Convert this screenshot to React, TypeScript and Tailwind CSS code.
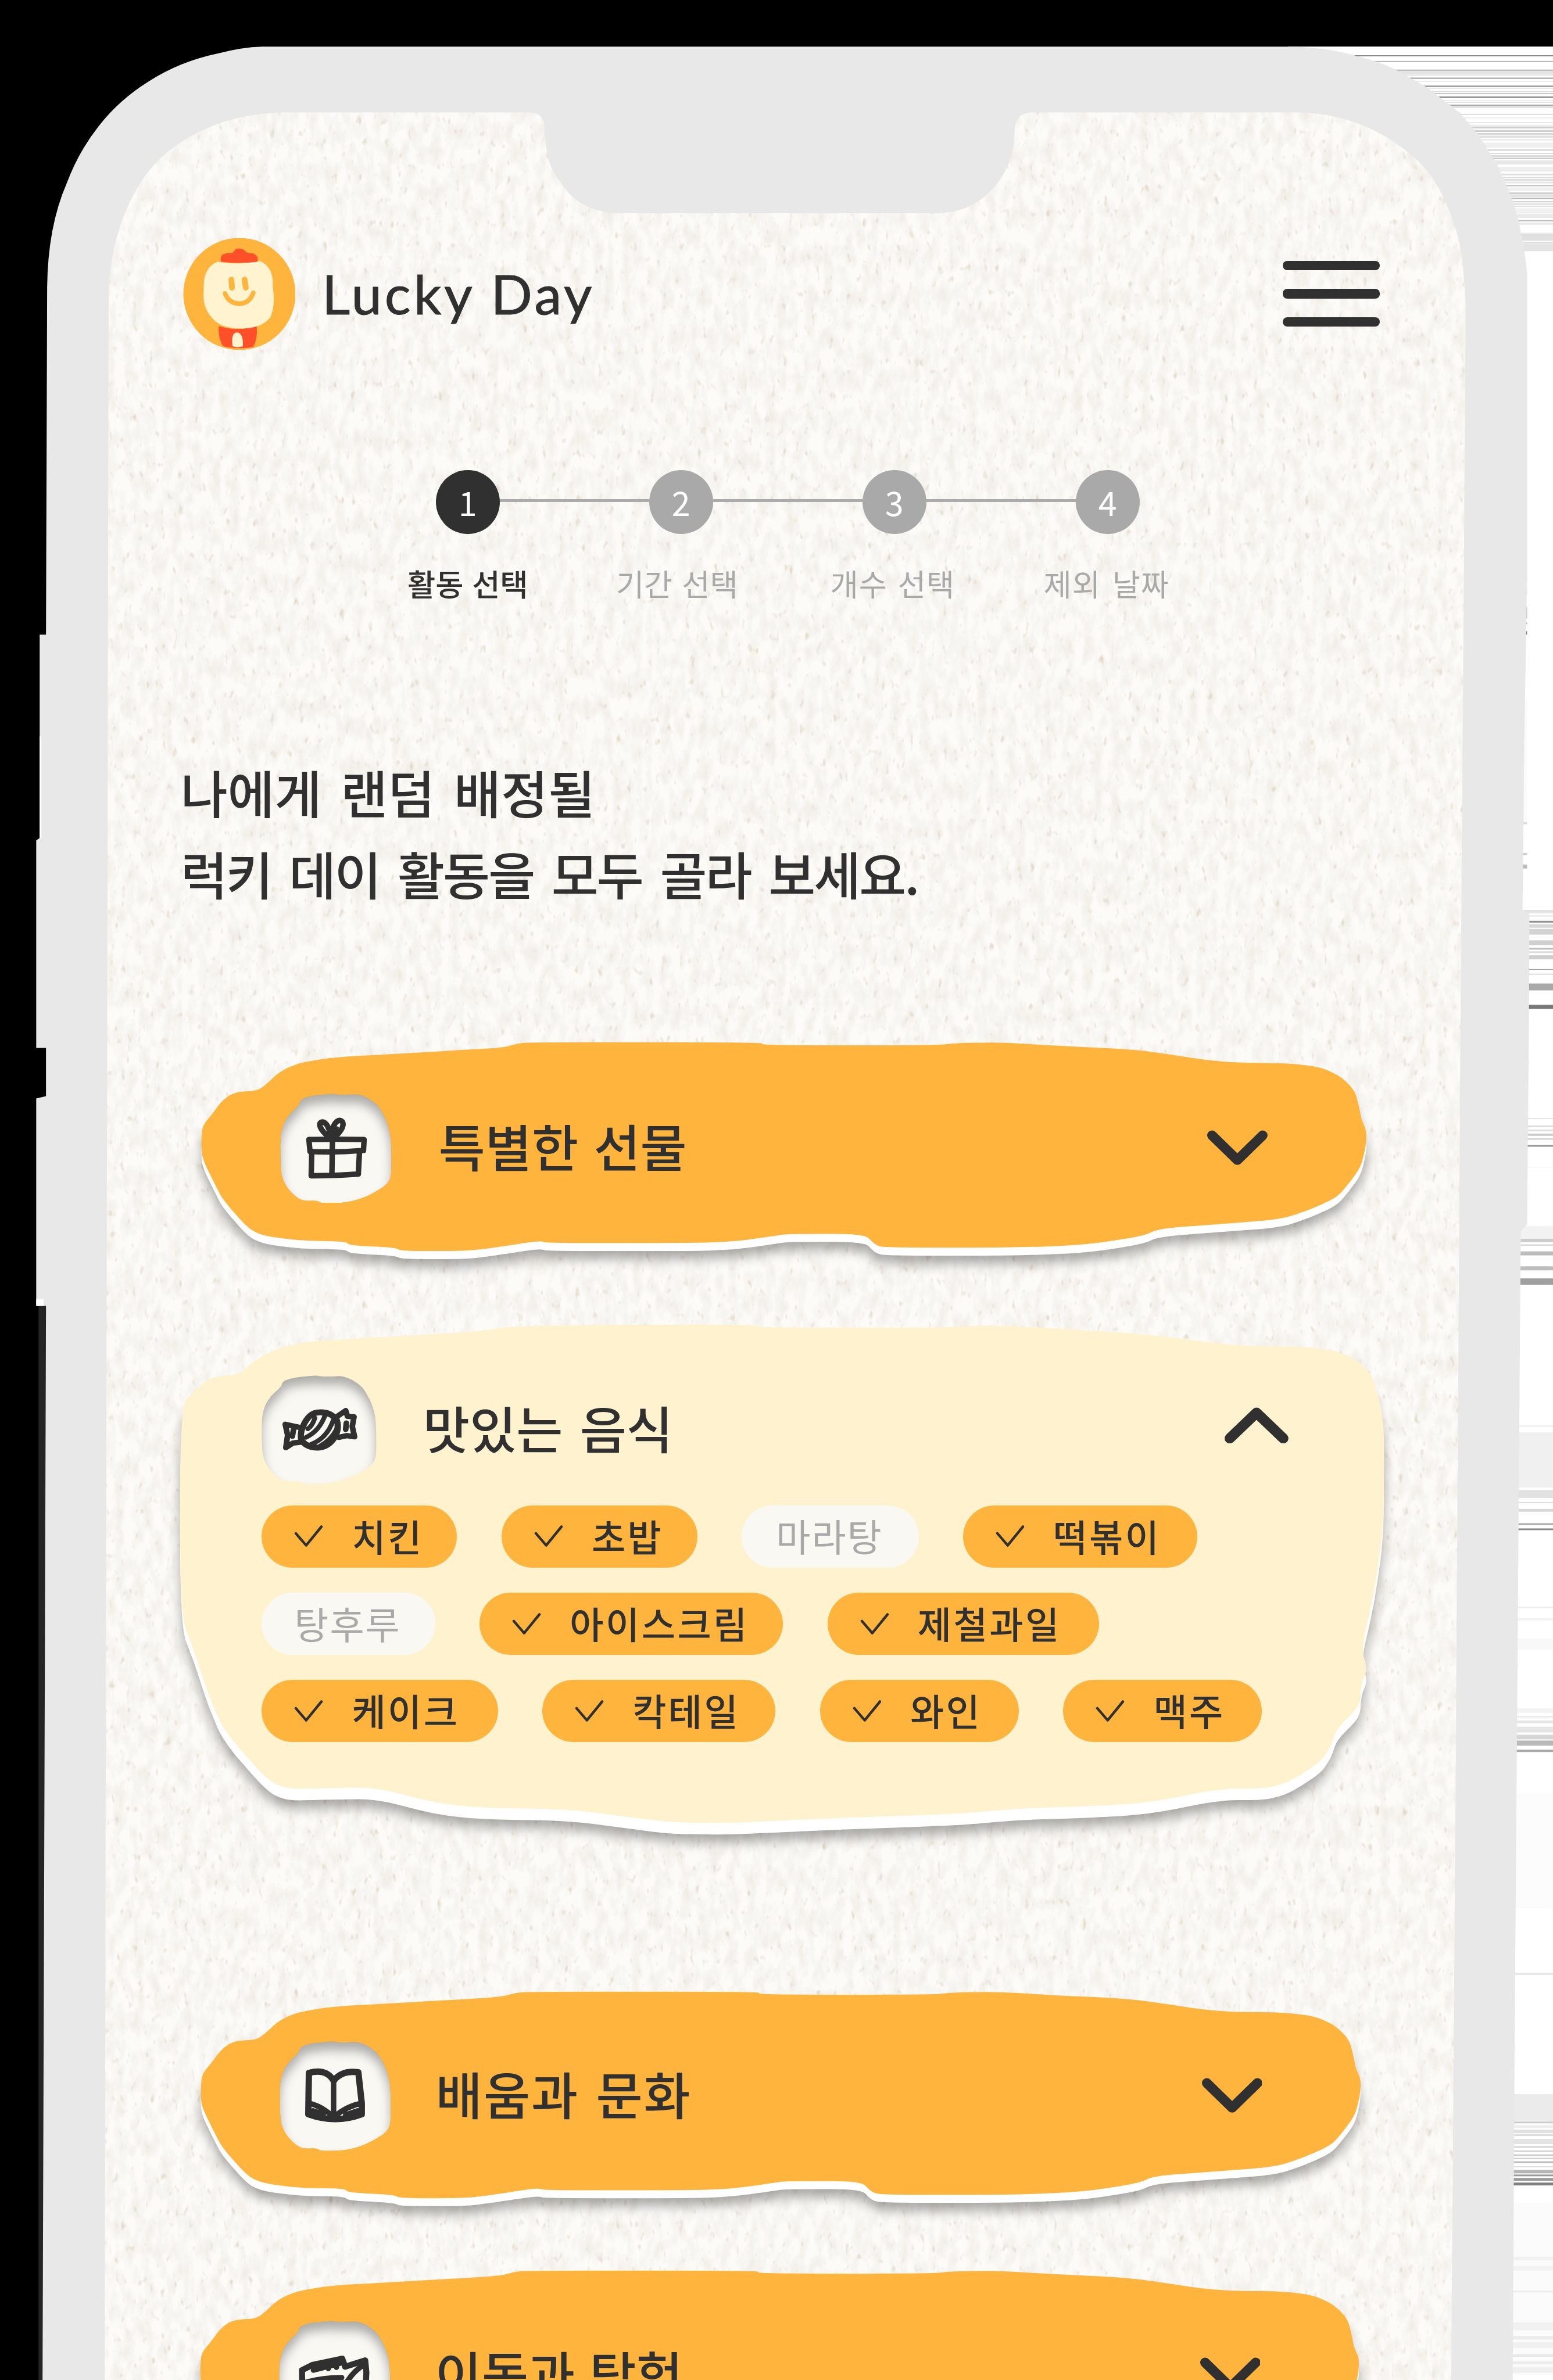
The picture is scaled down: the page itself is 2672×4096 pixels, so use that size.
import React, { useId } from 'react';

type Point = [number, number];

const INK = '#303030';

/** Joins the points of a hand-cut outline with slightly rounded corners. */
function cutPath(points: Point[]): string {
  const n = points.length;
  const parts: string[] = [];
  for (let i = 0; i < n; i++) {
    const prev = points[(i + n - 1) % n];
    const cur = points[i];
    const next = points[(i + 1) % n];
    const ax = cur[0] + (prev[0] - cur[0]) * 0.4;
    const ay = cur[1] + (prev[1] - cur[1]) * 0.4;
    const bx = cur[0] + (next[0] - cur[0]) * 0.4;
    const by = cur[1] + (next[1] - cur[1]) * 0.4;
    parts.push(`${i === 0 ? 'M' : 'L'}${ax.toFixed(1)} ${ay.toFixed(1)}Q${cur[0]} ${cur[1]} ${bx.toFixed(1)} ${by.toFixed(1)}`);
  }
  return parts.join('') + 'Z';
}

const CLOSED_CARD = cutPath([
  [350.5, 1980], [353, 1957], [371.5, 1935], [384, 1917], [400, 1904], [416, 1899], [447, 1897], [461, 1888],
  [482, 1868], [500, 1857], [524.5, 1848], [580, 1839], [686, 1833], [791, 1827], [875, 1822], [900, 1815], [924, 1812.7],
  [1324, 1812.7], [1328, 1818], [1631, 1818], [1666, 1814], [1743, 1813], [1841, 1819], [1950, 1824], [2002, 1829],
  [2125, 1848], [2241, 1849], [2297, 1856], [2332, 1872], [2357, 1897], [2365, 1930], [2368, 1947], [2377, 1967],
  [2376, 1993], [2367, 2030], [2345, 2060], [2325, 2083], [2276, 2105], [2227, 2121], [2122, 2129], [2016, 2137],
  [1988, 2150], [1890, 2165], [1771, 2170], [1539, 2170], [1522, 2165], [1504, 2146], [1371, 2146], [1352, 2149],
  [1282, 2159], [1212, 2162], [952, 2162], [938, 2158], [854, 2171], [809, 2176], [700, 2176], [686, 2170],
  [609, 2166], [600, 2159], [524, 2158], [461, 2150], [433, 2138], [388, 2087], [374, 2060], [351, 2013],
]);

const OPEN_CARD = cutPath([
  [313, 2443], [343, 2415], [358, 2401], [374, 2394], [416, 2390], [437, 2370], [472, 2349], [521, 2335], [592, 2329],
  [683, 2324.5], [837, 2315], [900, 2305], [1307, 2303], [1325, 2309], [1631, 2309], [1722, 2304.5], [1869, 2312],
  [2002, 2321.5], [2157, 2341], [2255, 2341.5], [2325, 2349], [2360, 2366], [2385, 2391], [2395, 2421.5],
  [2404, 2458], [2407, 2500], [2406, 2658], [2388, 2779], [2367, 2867], [2378, 2903], [2367, 2930], [2365, 2967],
  [2325, 3006], [2315, 3036.5], [2297, 3064], [2241, 3100], [2199, 3111], [2122, 3111], [1995, 3136],
  [1876, 3142.5], [1771, 3145.5], [1666, 3155], [1490, 3161], [1350, 3167], [1272, 3171], [1167, 3170],
  [1097, 3161], [991, 3147], [830, 3144], [753, 3135], [655, 3109], [571, 3110], [500, 3112], [465, 3097],
  [388, 3009], [360, 2942.5], [339, 2876], [313, 2809],
]);

const HOLE = cutPath([
  [0, 77], [5, 54], [15, 37], [33, 20], [36, 10], [54, 4], [93, 0], [100, 2], [122, 2], [135, 1], [152, 7], [170, 20],
  [184, 44], [193, 74], [194, 144], [184, 160], [152, 179], [117, 190], [72, 191], [64, 186], [36, 187],
  [12, 165], [1, 140],
]);

const BODY =
  'M456 81H2246Q2310 83 2358 97Q2394 105 2427 121L2479 150L2539 196L2573 237L2604 286L2629 344L2642 388L2651 435L2656 473V1000L2651 1300L2648 1583L2660 1590L2659 1800L2656 2130L2645 2142L2643 2400L2640 2800L2637 3200L2634 3600L2631 4141H74L80 2272H63V1911L80 1907V1823H63V1462L69 1458V1104H80L82 500Q83 395 116 319Q137 263 172 219Q207 174 258 142Q312 107 379 93Q420 82 456 81Z';

const SCREEN =
  'M500 195.5H921Q942 196 946 214C950 262 950 284 974 316Q1006 368 1072 371H1626Q1695 372 1737 316C1762 280 1764 250 1765 223Q1768 196 1794 195.5H2255Q2366 197 2450 266Q2504 306 2532 400Q2546 440 2549 536L2546 1000L2540 1800L2532 3050L2524 4141H182L185 2500L188 1000L189 513C192 400 236 308 293 263C350 218 420 196 500 195.5Z';

const STREAKS: [number, number, string][] = [
  [96, 2, '#8a8a8a'], [106, 2, '#b5b5b5'], [121, 3, '#bdbdbd'], [125, 4, '#e3e3e3'], [130, 1, '#c8c8c8'], [135, 2, '#989898'],
  [141, 1, '#d9d9d9'], [149, 2, '#858585'], [153, 1, '#c9c9c9'], [159, 1, '#cfcfcf'], [162, 1, '#999'], [168, 2, '#777'],
  [174, 1, '#ddd'], [178, 1, '#ddd'], [181, 7, '#e2e2e2'], [183, 1, '#aaa'], [198, 1, '#b5b5b5'], [204, 2, '#eee'], [213, 1, '#ccc'],
  [217, 8, '#ededed'], [221, 1, '#bcbcbc'], [227, 2, '#aaa'], [232, 2, '#bbb'], [236, 4, '#e0e0e0'], [243, 1, '#c9c9c9'],
  [248, 9, '#efefef'], [260, 2, '#ccc'], [266, 2, '#ddd'], [270, 4, '#d9d9d9'], [275, 1, '#b3b3b3'], [279, 7, '#e8e8e8'],
  [290, 8, '#efefef'], [297, 1, '#ddd'], [302, 3, '#ddd'], [308, 2, '#ddd'], [312, 2, '#ccc'], [316, 3, '#e5e5e5'], [322, 2, '#bdbdbd'],
  [326, 6, '#eee'], [335, 2, '#bbb'], [338, 6, '#e4e4e4'], [345, 1, '#999'], [350, 2, '#ccc'], [354, 2, '#d5d5d5'],
  [358, 2, '#e0e0e0'], [362, 7, '#f2f2f2'], [370, 1, '#aaa'], [372, 7, '#eaeaea'], [383, 2, '#bbb'], [387, 4, '#e8e8e8'],
  [405, 1, '#ddd'], [407, 12, '#e0e0e0'], [421, 1, '#bbb'], [423, 14, '#e4e4e4'],
  [1583, 6, '#e4e4e4'], [1592, 3, '#eee'], [1602, 3, '#8f8f8f'], [1608, 6, '#d5d5d5'], [1616, 10, '#d3d3d3'], [1636, 8, '#d0d0d0'],
  [1649, 3, '#bbb'], [1655, 3, '#dcdcdc'], [1662, 7, '#cfcfcf'], [1686, 1, '#999'], [1694, 1, '#aaa'], [1711, 12, '#a9a9a9'],
  [1748, 7, '#777'], [1945, 2, '#e5e5e5'], [1958, 3, '#ddd'], [1965, 3, '#ddd'], [1972, 4, '#ccc'], [1980, 3, '#d5d5d5'],
  [1992, 3, '#999'], [2030, 1, '#eee'], [2133, 22, '#f2f2f2'], [2155, 6, '#ccc'], [2165, 2, '#ccc'], [2177, 7, '#bbb'],
  [2203, 7, '#bdbdbd'], [2224, 11, '#a0a0a0'], [2480, 2, '#e9e9e9'], [2492, 96, '#f0f0f0'], [2592, 14, '#e2e2e2'],
  [2613, 2, '#ddd'], [2625, 5, '#d8d8d8'], [2650, 3, '#aaa'], [2659, 3, '#888'], [2795, 3, '#f0f0f0'], [2815, 4, '#f3f3f3'],
  [2850, 20, '#f8f8f8'], [2972, 8, '#f3f3f3'], [2985, 3, '#ececec'], [2993, 5, '#e8e8e8'], [3004, 10, '#e5e5e5'],
  [3018, 8, '#d6d6d6'], [3028, 9, '#b8b8b8'], [3044, 4, '#a9a9a9'], [3120, 200, '#fcfcfc'], [3432, 4, '#e9e9e9'],
  [3643, 48, '#ebebeb'], [3691, 3, '#ccc'], [3697, 5, '#eee'], [3705, 6, '#e0e0e0'], [3713, 3, '#ddd'], [3721, 9, '#e3e3e3'],
  [3733, 4, '#ddd'], [3741, 3, '#d5d5d5'], [3748, 3, '#c9c9c9'], [3754, 2, '#ccc'], [3760, 3, '#bbb'], [3769, 1, '#bbb'],
  [3775, 6, '#b5b5b5'], [3783, 3, '#999'], [3789, 5, '#999'], [3797, 5, '#7f7f7f'], [3832, 300, '#fbfbfb'], [3926, 6, '#f1f1f1'],
  [3942, 8, '#f2f2f2'], [3985, 3, '#ededed'], [4040, 14, '#f1f1f1'], [4064, 6, '#ececec'], [4075, 10, '#f0f0f0'],
  [4096, 4, '#e8e8e8'], [4108, 5, '#ececec'], [4118, 10, '#efefef'],
];

const SHORT_STREAKS: [number, number, string][] = [
  [1002, 2, '#ddd'], [1010, 2, '#ccc'], [1026, 9, '#d8d8d8'], [1056, 20, '#bdbdbd'], [1083, 3, '#aaa'], [1098, 6, '#888'],
  [1220, 210, '#fafafa'], [1430, 4, '#ddd'], [1484, 4, '#ccc'], [1504, 7, '#bbb'],
];

function PhoneFrame() {
  return (
    <svg className="absolute inset-0 h-[4141px] w-[2701px]" viewBox="0 0 2701 4141" aria-hidden="true">
      <defs>
        <filter id="paper" x="0" y="0" width="100%" height="100%" colorInterpolationFilters="sRGB">
          <feTurbulence type="fractalNoise" baseFrequency="0.06 0.028" numOctaves="4" seed="11" />
          <feColorMatrix values="0 0 0 0 0.89  0 0 0 0 0.865  0 0 0 0 0.82  0.9 0 0 0 -0.34" />
          <feComposite in2="SourceGraphic" operator="in" />
        </filter>
        <filter id="flecks" x="0" y="0" width="100%" height="100%" colorInterpolationFilters="sRGB">
          <feTurbulence type="fractalNoise" baseFrequency="0.1 0.05" numOctaves="2" seed="4" />
          <feColorMatrix values="0 0 0 0 0.83  0 0 0 0 0.77  0 0 0 0 0.68  0 2.4 0 0 -1.6" />
          <feComposite in2="SourceGraphic" operator="in" />
        </filter>
      </defs>
      <rect x="2240" y="81" width="461" height="4060" fill="#fff" />
      {STREAKS.map(([y, h, c]) => (
        <rect key={y} x="2300" y={y} width="401" height={h} fill={c} />
      ))}
      {SHORT_STREAKS.map(([y, h, c]) => (
        <rect key={y} x="2600" y={y} width="56" height={h} fill={c} />
      ))}
      <path d="M67 2272H80V4141H67Z" fill="#242424" />
      <path d={BODY} fill="#e8e8e8" />
      <path d="M69 1281h3v178h-3zM63 2260h13v12h-13z" fill="#fff" />
      <path d={SCREEN} fill="#fcfbf8" />
      <path d={SCREEN} filter="url(#paper)" />
      <path d={SCREEN} filter="url(#flecks)" />
    </svg>
  );
}

function Logo() {
  return (
    <svg className="h-[196px] w-[196px] shrink-0" viewBox="318 413 196 196" aria-hidden="true">
      <circle cx="416" cy="511" r="97.5" fill="#ffb43e" />
      <path d="M380 567Q413 577 446 567Q448 590 440 603Q416 608 388 602Q379 590 380 567Z" fill="#ff5029" />
      <path d="M404 602Q401 578 412 578Q423 579 422 602Q413 605 404 602Z" fill="#fff3d0" />
      <path d="M378 455Q415 461 452 454Q476 464 474 499Q479 530 470 551Q455 572 415 571Q382 570 369 553Q351 535 354 504Q352 465 378 455Z" fill="#fff3d0" />
      <path d="M384 455Q380 440 398 440Q407 440 408 434Q416 429 425 435Q427 440 438 440Q451 444 447 455Q416 459 384 455Z" fill="#ff5029" />
      <path d="M402 486L403 500M425 486L427 500" stroke="#ffb43e" strokeWidth="10" strokeLinecap="round" />
      <path d="M391 510Q397 527 416 528Q434 527 440 509" fill="none" stroke="#ffb43e" strokeWidth="8" strokeLinecap="round" />
    </svg>
  );
}

function Header() {
  return (
    <header className="mt-[413px] flex h-[196px] items-center justify-between pr-[301px] pl-[318px]">
      <div className="flex items-center">
        <Logo />
        <span className="ml-[46px] font-['Lato'] text-[95px] leading-[120px] tracking-[5px] whitespace-nowrap text-[#303030] [-webkit-text-stroke:1px_#303030]">
          Lucky Day
        </span>
      </div>
      <button type="button" aria-label="메뉴" className="flex w-[169px] flex-col gap-8">
        <span className="h-[17px] rounded-lg bg-[#303030]" />
        <span className="h-[17px] rounded-lg bg-[#303030]" />
        <span className="h-[17px] rounded-lg bg-[#303030]" />
      </button>
    </header>
  );
}

const STEPS = [
  { label: '활동 선택', text: 'font-medium text-[#303030] [word-spacing:3px]' },
  { label: '기간 선택', text: 'mr-[14px] text-[#a9a9a9] [word-spacing:5px]' },
  { label: '개수 선택', text: 'mr-[6px] tracking-[1px] text-[#a9a9a9] [word-spacing:5px]' },
  { label: '제외 날짜', text: 'mr-[4px] tracking-[1px] text-[#a9a9a9] [word-spacing:7px]' },
];

function Steps() {
  return (
    <ol className="mt-[209px] ml-[628px] grid w-[1484px] grid-cols-4">
      {STEPS.map(({ label, text }, i) => (
        <li key={label} className="flex flex-col items-center">
          <div className="flex w-full items-center">
            <span className={i === 0 ? 'mb-[6px] h-[5px] flex-1' : 'mb-[6px] h-[5px] flex-1 bg-[#acacac]'} />
            <span
              className={
                i === 0
                  ? 'flex size-[111px] items-center justify-center rounded-full bg-[#303030] text-[58px] leading-none text-white'
                  : 'flex size-[111px] items-center justify-center rounded-full bg-[#a9a9a9] text-[58px] leading-none text-white'
              }
            >
              {i + 1}
            </span>
            <span className={i === STEPS.length - 1 ? 'mb-[6px] h-[5px] flex-1' : 'mb-[6px] h-[5px] flex-1 bg-[#acacac]'} />
          </div>
          <span className={`${text} mt-[56px] text-[53px] leading-[60px] whitespace-nowrap`}>{label}</span>
        </li>
      ))}
    </ol>
  );
}

function IconHole({ children, wide = false }: { children: React.ReactNode; wide?: boolean }) {
  const id = useId().replace(/[^a-zA-Z0-9]/g, '');
  return (
    <svg
      className={wide ? 'mb-[4px] h-[189px] w-[200px] shrink-0' : 'mb-[4px] h-[191px] w-[194px] shrink-0'}
      viewBox="0 0 194 191"
      preserveAspectRatio="none"
      aria-hidden="true"
    >
      <clipPath id={`hole${id}`}>
        <path d={HOLE} />
      </clipPath>
      <filter id={`soft${id}`} x="-50%" y="-50%" width="200%" height="200%">
        <feGaussianBlur stdDeviation="9" />
      </filter>
      <g clipPath={`url(#hole${id})`}>
        <path d={HOLE} fill="#f9f8f3" />
        <path
          d={`M-80 -80H274V271H-80Z${HOLE}`}
          fillRule="evenodd"
          transform="translate(0 15)"
          filter={`url(#soft${id})`}
          className="fill-black/30"
        />
      </g>
      <g fill="none" stroke={INK} strokeWidth="9.5" strokeLinecap="round" strokeLinejoin="round">
        {children}
      </g>
    </svg>
  );
}

function GiftIcon() {
  return (
    <>
      <path d="M50 80Q98 79 146 80L145 99Q98 103 52 101Z" />
      <path d="M55 102L54 143Q98 143 136 140L138 101" />
      <path d="M91 80L90 141" />
      <path d="M89 78C75 70 64 54 71 50C80 47 87 62 89 78C88 60 98 42 107 48C115 54 102 73 89 78Z" />
      <path d="M82 60L90 78L99 60" strokeWidth="6" />
    </>
  );
}

function CandyIcon() {
  return (
    <>
      <path d="M69 92Q79 65 98 65Q117 64 127 79Q132 95 122 111Q112 126 95 127Q75 127 67 113Q65 102 69 92Z" strokeWidth="10.500" />
      <path d="M66 92L40 86L44 105L41 127L53 119L68 117M54 95L52 107" />
      <path d="M125 74L142 62L145 72L156 73L153 90L157 108L144 106L130 109M143 84L142 95" />
      <path d="M75 109Q98 98 108 68M84 121Q110 111 121 79M99 124Q117 114 127 94M78 94Q85 90 90 75" strokeWidth="8" />
    </>
  );
}

function BookIcon() {
  return (
    <>
      <path d="M51 55Q82 47 94 69Q108 50 137 54L143 108V127Q97 144 50 127Z" strokeWidth="11" />
      <path d="M94 69V131" />
      <path d="M51 108Q72 112 94 132Q118 112 143 108M58 121L76 127M136 121L115 128" />
    </>
  );
}

function TravelIcon() {
  return (
    <>
      <path d="M41 150L40 86L58 77L110 66L115 80L150 69L152 90L149 150" strokeWidth="10.500" />
      <path d="M44 108Q74 99 109 99M149 76Q128 88 115 112M84 75L86 83M97 73L100 81M60 86L106 74" />
    </>
  );
}

function Chevron({ up = false }: { up?: boolean }) {
  return up ? (
    <svg className="mb-[20px] h-[63px] w-[111px]" viewBox="0 0 111 63" aria-hidden="true">
      <path d="M9 54L55.500 9.500L102 54" fill="none" stroke={INK} strokeWidth="18" strokeLinecap="round" strokeLinejoin="round" />
    </svg>
  ) : (
    <svg className="mb-[5px] h-[62px] w-[105px]" viewBox="0 0 105 62" aria-hidden="true">
      <path d="M8.500 9L52.500 52L96.500 9" fill="none" stroke={INK} strokeWidth="17" strokeLinecap="round" strokeLinejoin="round" />
    </svg>
  );
}

function CutPaper({ d, viewBox, fill, edge }: { d: string; viewBox: string; fill: string; edge: number }) {
  return (
    <svg className="absolute inset-0 h-full w-full overflow-visible" viewBox={viewBox} preserveAspectRatio="none" aria-hidden="true">
      <g className="drop-shadow-[0_14px_10px_rgba(0,0,0,0.32)]">
        <path d={d} fill="#fff" transform={`translate(0 ${edge})`} />
      </g>
      <path d={d} fill={fill} />
    </svg>
  );
}

function CardTitle({ children, spacing }: { children: string; spacing: string }) {
  return (
    <h2 className={`${spacing} mb-[13px] flex-1 text-[88px] leading-[110px] font-medium whitespace-nowrap text-[#303030]`}>{children}</h2>
  );
}

type ClosedCardProps = { title: string; spacing: string; icon: React.ReactNode; className: string };

function ClosedCard({ title, spacing, icon, className }: ClosedCardProps) {
  return (
    <section className={className}>
      <CutPaper d={CLOSED_CARD} viewBox="350 1813 2027 363" fill="#ffb43e" edge={14} />
      <div className="relative flex h-full items-center pt-[8px] pr-[172px] pl-[137px]">
        <IconHole>{icon}</IconHole>
        <CardTitle spacing={spacing}>{title}</CardTitle>
        <Chevron />
      </div>
    </section>
  );
}

type Chip = { label: string; on: boolean; width: string };

const CHIP_ROWS: Chip[][] = [
  [
    { label: '치킨', on: true, width: 'w-[340px]' },
    { label: '초밥', on: true, width: 'w-[341px]' },
    { label: '마라탕', on: false, width: 'w-[308px]' },
    { label: '떡볶이', on: true, width: 'w-[407px]' },
  ],
  [
    { label: '탕후루', on: false, width: 'w-[302px]' },
    { label: '아이스크림', on: true, width: 'w-[528px]' },
    { label: '제철과일', on: true, width: 'w-[473px]' },
  ],
  [
    { label: '케이크', on: true, width: 'w-[411px]' },
    { label: '칵테일', on: true, width: 'w-[406px]' },
    { label: '와인', on: true, width: 'w-[346px]' },
    { label: '맥주', on: true, width: 'w-[346px]' },
  ],
];

function ChipButton({ label, on, width }: Chip) {
  if (!on) {
    return (
      <button type="button" className={`${width} flex h-[108px] items-center justify-center rounded-full bg-[#f9f8f3] pr-[3px] pb-[3px]`}>
        <span className="text-[65px] leading-[80px] tracking-[2px] whitespace-nowrap text-[#a9a9a9]">{label}</span>
      </button>
    );
  }
  return (
    <button type="button" className={`${width} flex h-[108px] items-center rounded-full bg-[#ffb43e] pl-[57px]`}>
      <svg className="h-[38px] w-[50px] shrink-0" viewBox="0 0 50 38" aria-hidden="true">
        <path d="M3 14L21 35L47.500 2.500" fill="none" stroke={INK} strokeWidth="4.500" strokeLinecap="round" strokeLinejoin="round" />
      </svg>
      <span className="mb-[4px] ml-[50px] text-[64px] leading-[80px] font-medium tracking-[3.500px] whitespace-nowrap text-[#303030]">{label}</span>
    </button>
  );
}

function OpenCard() {
  return (
    <section className="relative mt-[127px] ml-[313px] h-[868px] w-[2094px] shrink-0">
      <CutPaper d={OPEN_CARD} viewBox="313 2303 2094 868" fill="#fef2cf" edge={20} />
      <div className="relative pt-[91px] pl-[142px]">
        <div className="flex h-[189px] items-center pr-[166px]">
          <IconHole wide>
            <CandyIcon />
          </IconHole>
          <CardTitle spacing="ml-[81px] [word-spacing:10px]">맛있는 음식</CardTitle>
          <Chevron up />
        </div>
        <div className="mt-[35px] flex flex-col gap-[44px]">
          {CHIP_ROWS.map((row) => (
            <div key={row[0].label} className="flex gap-[77px]">
              {row.map((chip) => (
                <ChipButton key={chip.label} {...chip} />
              ))}
            </div>
          ))}
        </div>
      </div>
    </section>
  );
}

export default function App() {
  return (
    <div className="h-[4096px] w-[2672px] overflow-hidden bg-black">
      <div className="relative h-[4141px] w-[2701px] overflow-hidden font-['Noto_Sans_CJK_KR',sans-serif] [zoom:0.98926]">
        <PhoneFrame />
        <main className="relative flex h-[4141px] flex-col">
          <Header />
          <Steps />
          <p className="mt-[261px] ml-[314px] text-[89px] leading-[141.500px] font-medium whitespace-nowrap text-[#303030]">
            <span className="[word-spacing:13px]">나에게 랜덤 배정될</span>
            <br />
            <span className="tracking-[-3px] [word-spacing:14px]">럭키 데이 활동을 모두 골라 보세요.</span>
          </p>
          <ClosedCard
            title="특별한 선물"
            spacing="ml-[82px] [word-spacing:7px]"
            icon={<GiftIcon />}
            className="relative mt-[225px] ml-[350px] h-[363px] w-[2027px] shrink-0"
          />
          <OpenCard />
          <ClosedCard
            title="배움과 문화"
            spacing="ml-[78px] tracking-[2px] [word-spacing:8px]"
            icon={<BookIcon />}
            className="relative mt-[293px] ml-[349px] h-[359px] w-[2018px] shrink-0"
          />
          <ClosedCard
            title="이동과 탐험"
            spacing="ml-[78px] [word-spacing:6px]"
            icon={<TravelIcon />}
            className="relative mt-[127px] ml-[348px] h-[359px] w-[2016px] shrink-0"
          />
        </main>
      </div>
    </div>
  );
}
